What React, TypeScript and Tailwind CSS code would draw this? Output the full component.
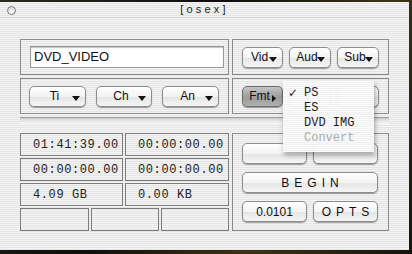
import React from 'react';

const stripes =
  'bg-[repeating-linear-gradient(to_bottom,#f4f4f4_0px,#f4f4f4_1px,#e5e5e5_1px,#e5e5e5_2px)]';

function Arrow({ right }: { right?: boolean }) {
  if (right) {
    return (
      <svg width="4" height="7" viewBox="0 0 4 7" className="absolute right-[6px] bottom-[4px]">
        <path d="M0 0 L4 3.5 L0 7 Z" fill="#111" />
      </svg>
    );
  }
  return (
    <svg width="8" height="5" viewBox="0 0 8 5" className="absolute right-[5px] bottom-[5px]">
      <path d="M0 0 L8 0 L4 5 Z" fill="#111" />
    </svg>
  );
}

function AquaButton({
  label,
  w,
  menu,
  sub,
  pressed,
  wide,
}: {
  label?: string;
  w: string;
  menu?: boolean;
  sub?: boolean;
  pressed?: boolean;
  wide?: boolean;
}) {
  const face = pressed
    ? 'bg-[linear-gradient(to_bottom,#c4c4c4,#9c9c9c_55%,#b0b0b0)] border-[#6f6f6f]'
    : 'bg-[linear-gradient(to_bottom,#ffffff,#f3f3f3_50%,#e4e4e4_51%,#f6f6f6)] border-[#8c8c8c]';
  return (
    <div
      className={`relative ${w} h-[21px] rounded-[5px] border ${face} shadow-[0_1px_1px_rgba(0,0,0,0.35)] flex items-center justify-center`}
    >
      {label && (
        <span
          className={`text-[12px] leading-none text-[#111] ${wide ? 'tracking-[5px] pl-[5px]' : ''} ${
            menu || sub ? 'pr-[6px]' : ''
          }`}
        >
          {label}
        </span>
      )}
      {menu && <Arrow />}
      {sub && <Arrow right />}
    </div>
  );
}

function Cell({ text, w }: { text?: string; w: string }) {
  return (
    <div
      className={`${w} h-[23px] border border-[#7c7c7c] flex items-center pl-[12px] font-['Liberation_Mono',monospace] text-[12px] text-[#222] tracking-[0.6px]`}
    >
      {text}
    </div>
  );
}

export default function App() {
  return (
    <div className="w-[412px] h-[254px] bg-[linear-gradient(120deg,#2a2a22,#0e0e0a_40%,#3a3315_70%,#15140e)] overflow-hidden pt-[2px] font-['Liberation_Sans',Arial,sans-serif]">
      <div className={`relative w-[409px] h-[248px] ${stripes} flex flex-col`}>
        {/* title bar */}
        <div className="relative h-[16px] flex items-center justify-center border-b border-[#d6d6d6]">
          <div className="absolute left-[7px] top-[4px] w-[9px] h-[9px] rounded-full border border-[#7a7a7a] bg-[radial-gradient(circle_at_50%_70%,#ffffff,#d0d0d0)]" />
          <span className="text-[11px] tracking-[3.2px] text-[#222] leading-none">[osex]</span>
        </div>

        <div className="pl-[20px] pt-[21px] flex flex-col">
          <div className="flex gap-[3px]">
            <div className="flex flex-col gap-[3px]">
              <div className="w-[209px] h-[36px] border border-[#8a8a8a] flex items-center pl-[9px]">
                <div className="w-[194px] h-[22px] bg-white border border-[#9a9a9a] shadow-[inset_0_1px_1px_rgba(0,0,0,0.25)] flex items-center pl-[3px] text-[13px] text-[#111]">
                  DVD_VIDEO
                </div>
              </div>
              <div className="w-[209px] h-[36px] border border-[#8a8a8a] flex items-center pl-[8px] gap-[10px]">
                <AquaButton label="Ti" w="w-[57px]" menu />
                <AquaButton label="Ch" w="w-[56px]" menu />
                <AquaButton label="An" w="w-[57px]" menu />
              </div>
            </div>
            <div className="flex flex-col gap-[3px]">
              <div className="w-[157px] h-[36px] border border-[#8a8a8a] flex items-center pl-[9px] gap-[6px]">
                <AquaButton label="Vid" w="w-[41px]" menu />
                <AquaButton label="Aud" w="w-[42px]" menu />
                <AquaButton label="Sub" w="w-[42px]" menu />
              </div>
              <div className="w-[157px] h-[36px] border border-[#8a8a8a] flex items-center pl-[9px] gap-[6px]">
                <AquaButton label="Fmt" w="w-[41px]" sub pressed />
                <AquaButton w="w-[42px]" />
                <AquaButton w="w-[42px]" />
              </div>
            </div>
          </div>

          {/* groove */}
          <div className="mt-[3px] w-[369px] h-[7px] border-t border-[#9a9a9a] bg-[linear-gradient(to_bottom,#cfcfcf,#e9e9e9_60%,#f6f6f6)]" />

          <div className="mt-[9px] flex gap-[3px]">
            <div className="flex flex-col gap-[2px]">
              <div className="flex gap-[2px]">
                <Cell w="w-[103px]" text="01:41:39.00" />
                <Cell w="w-[104px]" text="00:00:00.00" />
              </div>
              <div className="flex gap-[2px]">
                <Cell w="w-[103px]" text="00:00:00.00" />
                <Cell w="w-[104px]" text="00:00:00.00" />
              </div>
              <div className="flex gap-[2px]">
                <Cell w="w-[103px]" text="4.09 GB" />
                <Cell w="w-[104px]" text="0.00 KB" />
              </div>
              <div className="flex gap-[2px]">
                <Cell w="w-[69px]" />
                <Cell w="w-[68px]" />
                <Cell w="w-[68px]" />
              </div>
            </div>
            <div className="w-[157px] h-[98px] border border-[#8a8a8a] flex flex-col pl-[9px] pt-[9px] gap-[8px]">
              <div className="flex gap-[6px]">
                <AquaButton w="w-[65px]" />
                <AquaButton w="w-[65px]" />
              </div>
              <AquaButton label="BEGIN" w="w-[136px]" wide />
              <div className="flex gap-[6px]">
                <AquaButton label="0.0101" w="w-[65px]" />
                <AquaButton label="OPTS" w="w-[65px]" wide />
              </div>
            </div>
          </div>
        </div>

        {/* Fmt popup menu */}
        <div className="absolute left-[283px] top-[79px] w-[91px] h-[71px] bg-[repeating-linear-gradient(to_bottom,#fdfdfd_0px,#fdfdfd_1px,#f1f1f1_1px,#f1f1f1_2px)] opacity-95 shadow-[1px_3px_5px_rgba(0,0,0,0.35)] pt-[5px] font-['Liberation_Mono',monospace] text-[12px] leading-[15px]">
          <div className="flex items-center text-[#111]">
            <span className="w-[21px] pl-[5px] font-['DejaVu_Sans',sans-serif] text-[12px]">✓</span>
            <span>PS</span>
          </div>
          <div className="pl-[21px] text-[#111]">ES</div>
          <div className="pl-[21px] text-[#111]">DVD IMG</div>
          <div className="pl-[21px] text-[#a8a8a8]">Convert</div>
        </div>
      </div>
    </div>
  );
}
